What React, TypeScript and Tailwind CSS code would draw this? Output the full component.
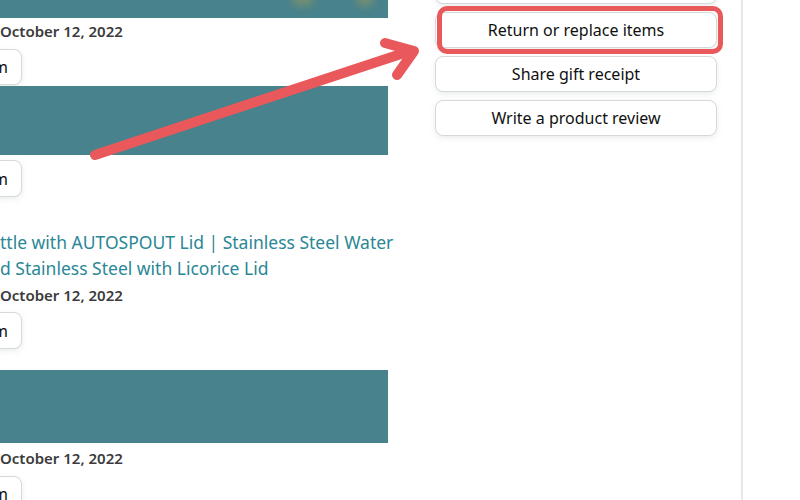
import React from 'react';

const font = { fontFamily: '"Noto Sans", "Open Sans", Arial, sans-serif' };

const LeftButton = ({ className = '' }: { className?: string }) => (
  <div
    className={`-ml-[128px] flex w-[150px] shrink-0 items-center justify-end whitespace-nowrap rounded-lg border border-[#d5d9d9] bg-white pr-[13px] text-[16px] text-[#0f1111] shadow-[0_2px_5px_rgba(213,217,217,0.5)] ${className}`}
  >
    View your item
  </div>
);

const DateLine = ({ className = '' }: { className?: string }) => (
  <div className={`whitespace-nowrap text-[15px] font-semibold leading-[20px] text-[#3b3b3b] ${className}`}>
    October 12, 2022
  </div>
);

const ActionButton = ({ label }: { label: string }) => (
  <div className="flex h-[36px] items-center justify-center rounded-lg border border-[#d5d9d9] bg-white text-[16px] text-[#0f1111] shadow-[0_2px_5px_rgba(213,217,217,0.5)]">
    {label}
  </div>
);

export default function App() {
  return (
    <div className="relative h-[500px] w-[800px] overflow-hidden bg-white" style={font}>
      <div className="flex">
        {/* left order list */}
        <div className="flex w-[388px] shrink-0 flex-col">
          <div className="relative h-[18px] w-[388px] bg-[#48828c]">
            <div className="absolute -top-[8px] left-[292px] h-[14px] w-[22px] rounded-full bg-[#b9a24a] opacity-40 blur-[4px]" />
            <div className="absolute -top-[8px] left-[356px] h-[14px] w-[18px] rounded-full bg-[#b9a24a] opacity-40 blur-[4px]" />
          </div>
          <DateLine className="mt-[3px]" />
          <LeftButton className="mt-[8px] h-[36px]" />
          <div className="mt-[1px] h-[69px] w-[388px] bg-[#48828c]" />
          <LeftButton className="mt-[5px] h-[37px]" />
          <div className="mt-[32px] whitespace-nowrap text-[17.5px] leading-[26px] text-[#2a8796]">
            <div>ttle with AUTOSPOUT Lid | Stainless Steel Water</div>
            <div>d Stainless Steel with Licorice Lid</div>
          </div>
          <DateLine className="mt-[4px]" />
          <LeftButton className="mt-[7px] h-[37px]" />
          <div className="mt-[21px] h-[73px] w-[388px] bg-[#48828c]" />
          <DateLine className="mt-[5px]" />
          <LeftButton className="mt-[8px] h-[36px]" />
        </div>

        {/* right actions */}
        <div className="-mt-[32px] ml-[47px] flex w-[282px] shrink-0 flex-col gap-2">
          <ActionButton label="Track package" />
          <ActionButton label="Return or replace items" />
          <ActionButton label="Share gift receipt" />
          <ActionButton label="Write a product review" />
        </div>

        <div className="ml-[24px] h-[500px] w-[2px] bg-[#e8e8e8]" />
      </div>

      {/* annotation highlight */}
      <div className="absolute left-[437px] top-[6px] h-[48px] w-[286px] rounded-[10px] border-[5px] border-[#e9585b]" />

      {/* annotation arrow */}
      <svg className="absolute left-0 top-0" width="800" height="500" viewBox="0 0 800 500">
        <line x1="95" y1="155" x2="410" y2="51" stroke="#e9585b" strokeWidth="10" strokeLinecap="round" />
        <polyline
          points="385,43 414,51 397,75"
          fill="none"
          stroke="#e9585b"
          strokeWidth="10"
          strokeLinecap="round"
          strokeLinejoin="round"
        />
      </svg>
    </div>
  );
}
